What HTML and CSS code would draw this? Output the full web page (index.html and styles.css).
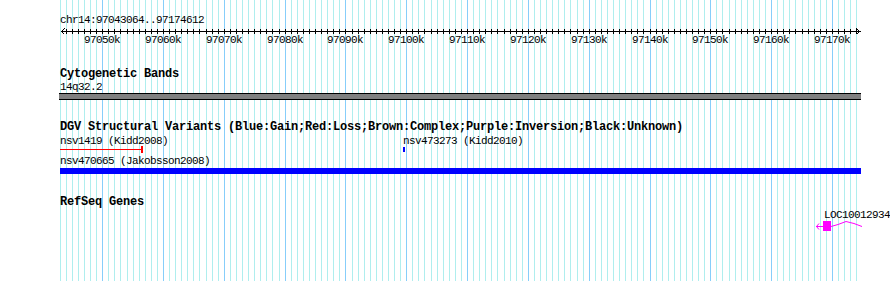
FILE: index.html
```html
<!DOCTYPE html>
<html lang="en">

<head>
    <meta charset="utf-8">
    <title>chr14:97043064..97174612</title>
    <link rel="stylesheet" href="styles.css">
</head>

<body>
    <div class="browser" id="browser" data-start="97043064" data-end="97174612">
        <svg class="grid" id="grid" width="890" height="281" shape-rendering="crispEdges"></svg>

        <div class="track ruler">
            <div class="ruler-name">chr14:97043064..97174612</div>
            <svg class="scale" id="scale" width="830" height="20" shape-rendering="crispEdges">
                <rect x="1" y="4" width="800" height="1" fill="#000"></rect>
                <path d="M4.5 1.5 L1.5 4.5 L4.5 7.5" class="arrow"></path>
                <path d="M796.5 1.5 L799.5 4.5 L796.5 7.5" class="arrow"></path>
            </svg>
        </div>

        <div class="track">
            <h3>Cytogenetic Bands</h3>
            <div class="glyphs cyto-glyphs">
                <span class="label" style="left: 0px; top: 0px;">14q32.2</span>
                <div class="band" style="left: -1px; width: 802px;"></div>
            </div>
        </div>

        <div class="track dgv">
            <h3>DGV Structural Variants (Blue:Gain;Red:Loss;Brown:Complex;Purple:Inversion;Black:Unknown)</h3>
            <div class="glyphs dgv-glyphs">
                <span class="label" style="left: 0px; top: 1px;">nsv1419 (Kidd2008)</span>
                <div class="sv-line loss" style="left: 0px; width: 81px;"></div>
                <div class="sv-end loss" style="left: 81px;"></div>

                <span class="label" style="left: 343px; top: 1px;">nsv473273 (Kidd2010)</span>
                <div class="sv-mark gain" style="left: 343px;"></div>

                <span class="label" style="left: 0px; top: 21px;">nsv470665 (Jakobsson2008)</span>
                <div class="sv-bar gain" style="left: 0px; width: 801px;"></div>
            </div>
        </div>

        <div class="track refseq">
            <h3>RefSeq Genes</h3>
            <div class="glyphs gene-glyphs">
                <span class="label" style="left: 764px; top: 0px;">LOC10012934</span>
                <svg class="gene" style="left: 750px;" width="80" height="16">
                    <path d="M6 7.5 H13" class="strand"></path>
                    <path d="M9 4.5 L6.5 7.5 L9 10.5" class="strand"></path>
                    <rect x="13" y="2" width="8" height="10" fill="#ff00ff"></rect>
                    <path d="M21 7.5 L28 5.5 L36 2.5 L44 4.5 L52 7.5" class="intron"></path>
                </svg>
            </div>
        </div>
    </div>
    <script src="script.js"></script>
</body>

</html>
```

FILE: styles.css
```css
body {
    margin: 0;
    background: #ffffff;
}

.browser {
    position: relative;
    width: 890px;
    height: 281px;
    padding-left: 60px;
    box-sizing: border-box;
    overflow: hidden;
    font-family: "Liberation Mono", "DejaVu Sans Mono", monospace;
    color: #000;
}

.grid {
    position: absolute;
    top: 0;
    left: 0;
}

.track {
    position: relative;
    margin-top: 21px;
}

.track h3 {
    margin: 0;
    font-size: 12px;
    letter-spacing: -0.2px;
    font-weight: bold;
    line-height: 13px;
    white-space: nowrap;
}

.ruler {
    margin-top: 0;
    padding-top: 14px;
}

.ruler-name {
    font-size: 11px;
    letter-spacing: -0.6px;
    line-height: 13px;
}

.scale {
    display: block;
}

.scale text {
    font-family: "Liberation Mono", "DejaVu Sans Mono", monospace;
    font-size: 11px;
    letter-spacing: -0.6px;
}

.arrow {
    fill: none;
    stroke: #000;
    stroke-width: 1;
}

.glyphs {
    position: relative;
}

.label {
    position: absolute;
    font-size: 11px;
    letter-spacing: -0.6px;
    line-height: 12px;
    white-space: nowrap;
}

/* cytoband */
.cyto-glyphs {
    height: 19px;
}

.band {
    position: absolute;
    top: 12px;
    height: 5px;
    background: #808080;
    border-top: 1px solid #000;
    border-bottom: 1px solid #000;
}

/* structural variants */
.dgv-glyphs {
    height: 40px;
}

.loss {
    background: #ff0000;
}

.gain {
    background: #0000ff;
}

.sv-line {
    position: absolute;
    top: 15px;
    height: 1px;
}

.sv-end {
    position: absolute;
    top: 12px;
    width: 2px;
    height: 7px;
}

.sv-mark {
    position: absolute;
    top: 13px;
    width: 2px;
    height: 5px;
}

.sv-bar {
    position: absolute;
    top: 34px;
    height: 6px;
}

/* genes */
.refseq {
    margin-top: 22px;
}

.gene-glyphs {
    height: 30px;
}

.gene {
    position: absolute;
    top: 10px;
}

.strand,
.intron {
    fill: none;
    stroke: #ff00ff;
    stroke-width: 1;
}
```

FILE: script.js
```js
const browser = document.getElementById("browser");
const start = Number(browser.dataset.start);
const end = Number(browser.dataset.end);
const left = 60;
const width = 800;
const scale = width / (end - start);
const NS = "http://www.w3.org/2000/svg";

function toX(pos) {
    return Math.round(left + (pos - start) * scale);
}

function svgEl(name, attrs) {
    const el = document.createElementNS(NS, name);
    for (const key in attrs) el.setAttribute(key, attrs[key]);
    return el;
}

const grid = document.getElementById("grid");
const ruler = document.getElementById("scale");

for (let k = Math.floor(start / 1000); k * 1000 <= end; k++) {
    const x = toX(k * 1000);
    if (x < left) continue;
    const major = k % 10 === 0;

    grid.appendChild(svgEl("rect", {
        x: x, y: 0, width: 1, height: 281,
        fill: major ? "#87cefa" : "#afeeee"
    }));

    if (k * 1000 < start) continue;
    ruler.appendChild(svgEl("rect", {
        x: x - left, y: 2, width: 1, height: 5, fill: "#000"
    }));

    if (major) {
        const label = svgEl("text", {
            x: x - left, y: 16, "text-anchor": "middle"
        });
        label.textContent = `${k}k`;
        ruler.appendChild(label);
    }
}
```
